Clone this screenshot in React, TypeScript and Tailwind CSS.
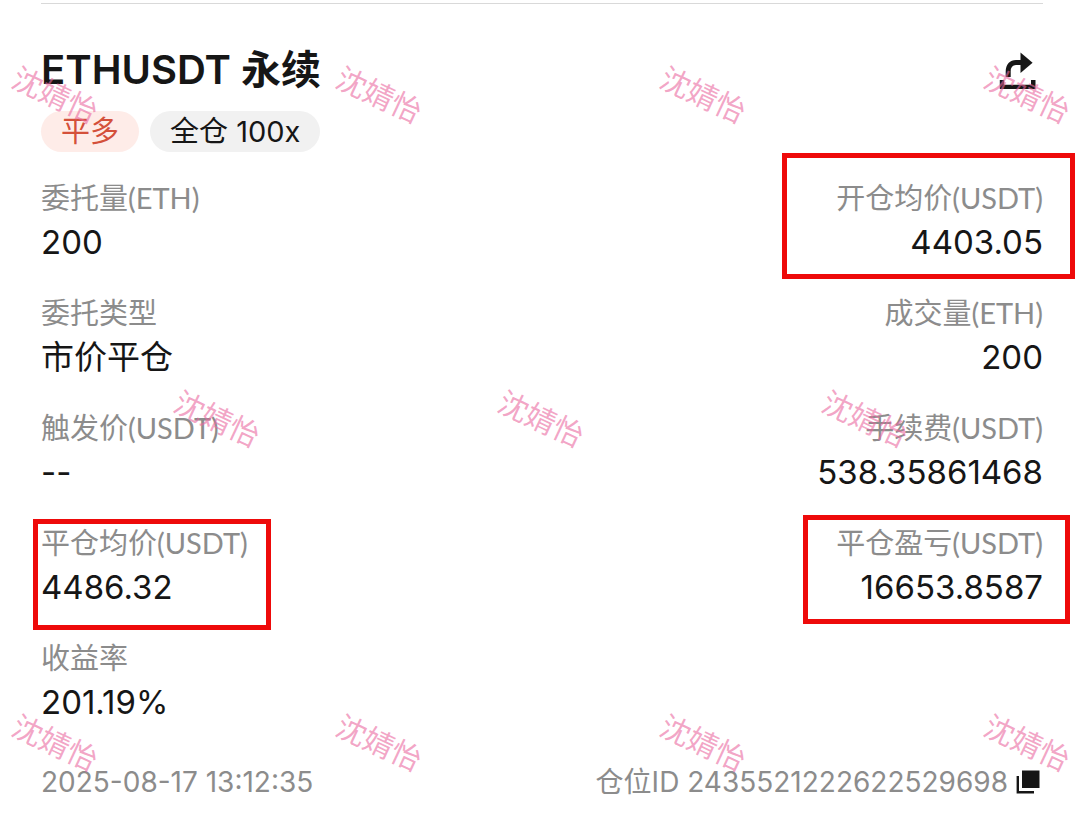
import {FC} from 'react';
import clsx from 'clsx';

type Field = {
  label: string;
  value: string;
  // marker frame drawn around the field
  frame?: string;
};

// fields are listed row by row, left column first
const fields: Field[] = [
  {label: '委托量(ETH)', value: '200'},
  {
    label: '开仓均价(USDT)',
    value: '4403.05',
    frame: '-top-[25px] -bottom-[13px] -right-[32px] w-[293px]',
  },
  {label: '委托类型', value: '市价平仓'},
  {label: '成交量(ETH)', value: '200'},
  {label: '触发价(USDT)', value: '--'},
  {label: '手续费(USDT)', value: '538.35861468'},
  {
    label: '平仓均价(USDT)',
    value: '4486.32',
    frame: '-top-[4px] -bottom-[19px] -left-[8px] w-[238px]',
  },
  {
    label: '平仓盈亏(USDT)',
    value: '16653.8587',
    frame: '-top-[8px] -bottom-[13px] -right-[27px] w-[267px]',
  },
  {label: '收益率', value: '201.19%'},
];

const WATERMARK_STEP = 324;
const WATERMARK_ROWS = [
  {x: 55, y: 95, count: 4},
  {x: 217, y: 419, count: 3},
  {x: 55, y: 743, count: 4},
];

const ShareIcon: FC = () => (
  <svg width="44" height="44" viewBox="0 0 44 44" aria-hidden="true">
    <path
      d="M9.2 29V23.5C9.2 17.5 12.5 14.5 17 14.5H23"
      fill="none"
      stroke="#161616"
      strokeWidth="5"
    />
    <path d="M21.5 4.5L33.6 14.7L21.5 25Z" fill="#161616" />
    <path d="M0.8 32H5.2V36.8H32V32H36.5V41H0.8Z" fill="#161616" />
  </svg>
);

const CopyIcon: FC = () => (
  <svg width="27" height="24" viewBox="0 0 27 24" aria-hidden="true">
    <path d="M6 0.5H23.5V18H6Z" fill="#161616" />
    <path d="M1.8 6V22.2H18" fill="none" stroke="#161616" strokeWidth="2.4" />
  </svg>
);

const Watermark: FC<{text: string}> = ({text}) => (
  <div
    aria-hidden="true"
    className="pointer-events-none absolute inset-0 overflow-hidden">
    {WATERMARK_ROWS.map((row) =>
      Array.from({length: row.count}, (_, i) => (
        <span
          key={`${row.y}-${i}`}
          className="absolute -translate-x-1/2 -translate-y-1/2 rotate-[25deg] whitespace-nowrap text-[30px] leading-none text-[#ea6a9f]/60"
          style={{left: row.x + i * WATERMARK_STEP, top: row.y}}>
          {text}
        </span>
      ))
    )}
  </div>
);

const FieldItem: FC<Field & {alignRight: boolean}> = ({
  label,
  value,
  frame,
  alignRight,
}) => (
  <div className={clsx('relative', alignRight && 'text-right')}>
    <dt className="font-[Lato,'Noto_Sans_CJK_SC',sans-serif] text-[29px] leading-10 text-[#8c8c8c]">
      {label}
    </dt>
    <dd className="text-[33px] leading-[48px]">{value}</dd>
    {frame && (
      <span className={clsx('absolute border-5 border-[#ee0a0a]', frame)} />
    )}
  </div>
);

const App: FC = () => {
  return (
    <main className="relative min-h-screen bg-white px-[41px] pt-[3px] font-[Inter,'Noto_Sans_CJK_SC',sans-serif] text-[#161616]">
      <div className="border-t border-[#d9d9d9]">
        <header className="flex items-center justify-between pt-[38px]">
          <h1 className="text-[40px] leading-[56px] font-semibold">
            ETHUSDT 永续
          </h1>
          <button type="button" aria-label="分享">
            <ShareIcon />
          </button>
        </header>

        <div className="mt-[13px] flex gap-[11px] text-[29px] leading-[41px]">
          <span className="rounded-full bg-[#feece8] px-5 text-[#d4503a]">
            平多
          </span>
          <span className="rounded-full bg-[#f1f1f1] px-5">全仓 100x</span>
        </div>

        <dl className="mt-[26px] grid grid-cols-2 gap-y-[27px]">
          {fields.map((field, i) => (
            <FieldItem key={field.label} {...field} alignRight={i % 2 === 1} />
          ))}
        </dl>

        <footer className="mt-9 flex items-center justify-between text-[28px] leading-10 text-[#8c8c8c]">
          <time dateTime="2025-08-17T13:12:35">2025-08-17 13:12:35</time>
          <div className="flex items-center gap-2">
            <span>仓位ID 2435521222622529698</span>
            <button type="button" aria-label="复制仓位ID">
              <CopyIcon />
            </button>
          </div>
        </footer>
      </div>

      <Watermark text="沈婧怡" />
    </main>
  );
};

export default App;
